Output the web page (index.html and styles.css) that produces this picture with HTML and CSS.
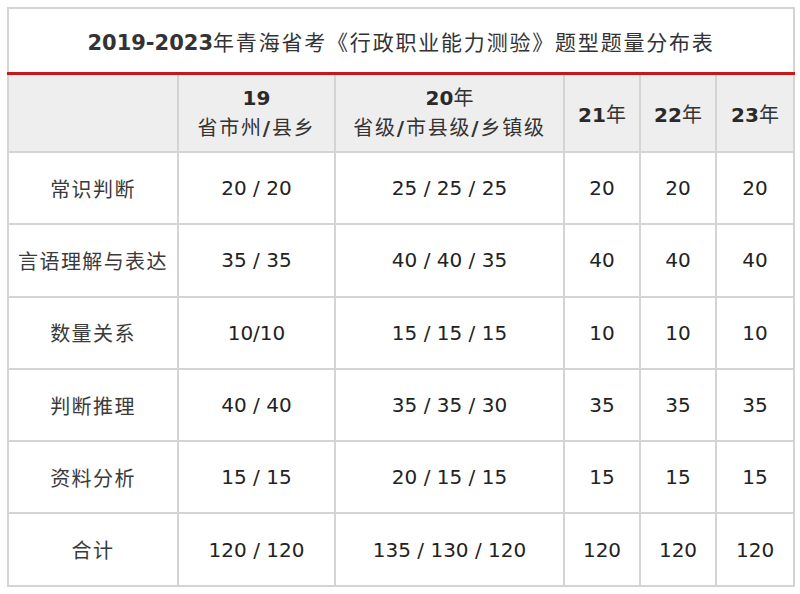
FILE: index.html
```html
<!DOCTYPE html>
<html lang="zh-CN">
<head>
<meta charset="utf-8">
<title>2019-2023年青海省考《行政职业能力测验》题型题量分布表</title>
<link rel="stylesheet" href="styles.css">
</head>
<body>
<div class="wrap">
  <table class="grid">
    <colgroup>
      <col class="c0"><col class="c1"><col class="c2"><col class="c3"><col class="c4"><col class="c5">
    </colgroup>
    <thead>
      <tr class="title-row">
        <th colspan="6" class="title"><b class="num">2019-2023</b>年青海省考《行政职业能力测验》题型题量分布表</th>
      </tr>
      <tr class="head-row">
        <th></th>
        <th><div class="line1"><b class="num">19</b></div><div class="line2">省市州<b>/</b>县乡</div></th>
        <th><div class="line1"><b class="num">20</b>年</div><div class="line2">省级<b>/</b>市县级<b>/</b>乡镇级</div></th>
        <th><b class="num">21</b>年</th>
        <th><b class="num">22</b>年</th>
        <th><b class="num">23</b>年</th>
      </tr>
    </thead>
    <tbody>
      <tr><td class="label">常识判断</td><td>20 / 20</td><td>25 / 25 / 25</td><td>20</td><td>20</td><td>20</td></tr>
      <tr><td class="label">言语理解与表达</td><td>35 / 35</td><td>40 / 40 / 35</td><td>40</td><td>40</td><td>40</td></tr>
      <tr><td class="label">数量关系</td><td>10/10</td><td>15 / 15 / 15</td><td>10</td><td>10</td><td>10</td></tr>
      <tr><td class="label">判断推理</td><td>40 / 40</td><td>35 / 35 / 30</td><td>35</td><td>35</td><td>35</td></tr>
      <tr><td class="label">资料分析</td><td>15 / 15</td><td>20 / 15 / 15</td><td>15</td><td>15</td><td>15</td></tr>
      <tr><td class="label">合计</td><td>120 / 120</td><td>135 / 130 / 120</td><td>120</td><td>120</td><td>120</td></tr>
    </tbody>
  </table>
</div>
</body>
</html>
```
FILE: styles.css
```css
html, body {
  margin: 0;
  padding: 0;
  background: #ffffff;
}
body {
  font-family: "DejaVu Sans", "Noto Sans CJK SC", sans-serif;
  color: #333333;
}
.wrap {
  padding: 7px 0 0 7px;
}
.grid {
  border-collapse: collapse;
  table-layout: fixed;
  width: 786px;
}
.c0 { width: 170px; }
.c1 { width: 157px; }
.c2 { width: 229px; }
.c3 { width: 76px; }
.c4 { width: 76px; }
.c5 { width: 78px; }

.grid th, .grid td {
  border: 2px solid #d4d4d4;
  text-align: center;
  vertical-align: middle;
  padding: 0;
}
.title-row .title {
  height: 63px;
  background: #ffffff;
  border-bottom: 3px solid #c8161d;
  font-family: "Noto Sans CJK SC", sans-serif;
  font-weight: normal;
  font-size: 21px;
  letter-spacing: 1.8px;
  color: #333333;
  padding-top: 0;
}
.title .num {
  font-family: "DejaVu Sans", sans-serif;
  font-weight: bold;
  font-size: 21px;
  letter-spacing: 0;
}
.head-row th {
  height: 76px;
  background: #eeeeee;
  font-family: "Noto Sans CJK SC", sans-serif;
  font-weight: normal;
  font-size: 20px;
  color: #333333;
}
.head-row .num {
  font-family: "DejaVu Sans", sans-serif;
  font-weight: bold;
  font-size: 20px;
  color: #2a2a2a;
}
.line1 {
  line-height: 27px;
}
.line2 {
  line-height: 30px;
  letter-spacing: 1.8px;
}
.line2 b {
  font-family: "DejaVu Sans", sans-serif;
  font-weight: bold;
}
.grid tbody td {
  height: 70.3px;
  font-size: 20px;
  color: #222222;
}
.grid tbody td.label {
  font-family: "Noto Sans CJK SC", sans-serif;
  font-size: 20px;
  letter-spacing: 1.4px;
  color: #3a3a3a;
}
```
